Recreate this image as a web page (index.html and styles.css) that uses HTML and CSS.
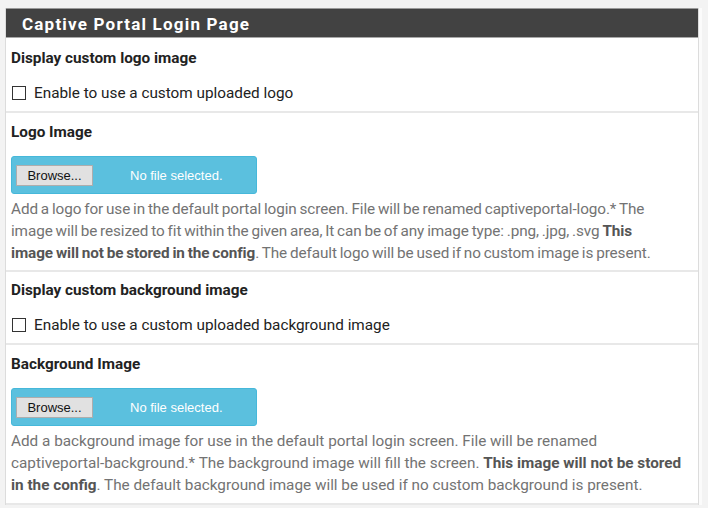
FILE: index.html
```html
<!DOCTYPE html>
<html>
<head>
<meta charset="utf-8">
<link rel="stylesheet" href="styles.css">
</head>
<body>
<div class="panel">
  <div class="panel-heading">Captive Portal Login Page</div>
  <div class="row r1">
    <div class="label">Display custom logo image</div>
    <label class="check"><span class="box"></span>Enable to use a custom uploaded logo</label>
  </div>
  <div class="row r2">
    <div class="label">Logo Image</div>
    <div class="file"><span class="browse">Browse...</span><span class="nofile">No file selected.</span></div>
    <p class="help">Add a logo for use in the default portal login screen. File will be renamed captiveportal-logo.* The<br>image will be resized to fit within the given area, It can be of any image type: .png, .jpg, .svg <b>This<br>image will not be stored in the config</b>. The default logo will be used if no custom image is present.</p>
  </div>
  <div class="row r3">
    <div class="label">Display custom background image</div>
    <label class="check"><span class="box"></span>Enable to use a custom uploaded background image</label>
  </div>
  <div class="row r4">
    <div class="label">Background Image</div>
    <div class="file"><span class="browse">Browse...</span><span class="nofile">No file selected.</span></div>
    <p class="help">Add a background image for use in the default portal login screen. File will be renamed captiveportal-background.* The background image will fill the screen. <b>This image will not be stored in the config</b>. The default background image will be used if no custom background is present.</p>
  </div>
</div>
</body>
</html>
```
FILE: styles.css
```css
html, body {
  margin: 0;
  padding: 0;
}
body {
  background: #f3f3f3;
  font-family: Roboto, "Liberation Sans", sans-serif;
  font-size: 15.3px;
  color: #222;
  padding: 8px 0 0 5px;
}
.panel {
  width: 692px;
  background: #fff;
  border-left: 1px solid #dcdcdc;
  border-right: 1px solid #dcdcdc;
  box-shadow: 3px 0 0 #fbfbfb;
}
.panel-heading {
  height: 28px;
  line-height: 30px;
  background: #424242;
  border-top: 1px solid #9a9a9a;
  border-bottom: 1px solid #a8a8a8;
  color: #fff;
  font-weight: bold;
  font-size: 17px;
  letter-spacing: 1.2px;
  padding-left: 16px;
  overflow: hidden;
}
.row {
  padding: 0 5px;
  border-bottom: 2px solid #e8e8e8;
}
.label {
  font-weight: bold;
  line-height: 20px;
  color: #222;
}
.r1 { padding-top: 10px; padding-bottom: 8px; }
.r1 .label { margin-bottom: 15px; }
.r2 { padding-top: 9px; padding-bottom: 6px; }
.r2 .label { margin-bottom: 14px; }
.r2 .help { margin-top: 4px; letter-spacing: -0.1px; word-spacing: -0.8px; padding-right: 0; }
.r3 { padding-top: 8px; padding-bottom: 8px; }
.r3 .label { margin-bottom: 15px; }
.r4 { padding-top: 9px; padding-bottom: 7px; }
.r4 .label { margin-bottom: 14px; }
.r4 .help { margin-top: 4px; }
.check {
  display: flex;
  align-items: center;
  line-height: 20px;
  color: #222;
}
.box {
  width: 12px;
  height: 12px;
  border: 1px solid #333;
  background: #fff;
  margin: 0 8px 0 1px;
}
.file {
  width: 244px;
  height: 36px;
  background: #5bc0de;
  border: 1px solid #46b8da;
  border-radius: 3px;
  display: flex;
  align-items: center;
  font-family: "Liberation Sans", Arial, sans-serif;
  font-size: 13px;
}
.browse {
  width: 75px;
  height: 19px;
  line-height: 19px;
  margin-left: 4px;
  background: #e1e1e1;
  border: 1px solid #adadad;
  color: #111;
  text-align: center;
}
.nofile {
  color: #fff;
  margin-left: 37px;
}
.help {
  margin: 5px 0 0;
  line-height: 22px;
  color: #737373;
  padding-right: 4px;
}
.help b {
  color: #555;
}
```
